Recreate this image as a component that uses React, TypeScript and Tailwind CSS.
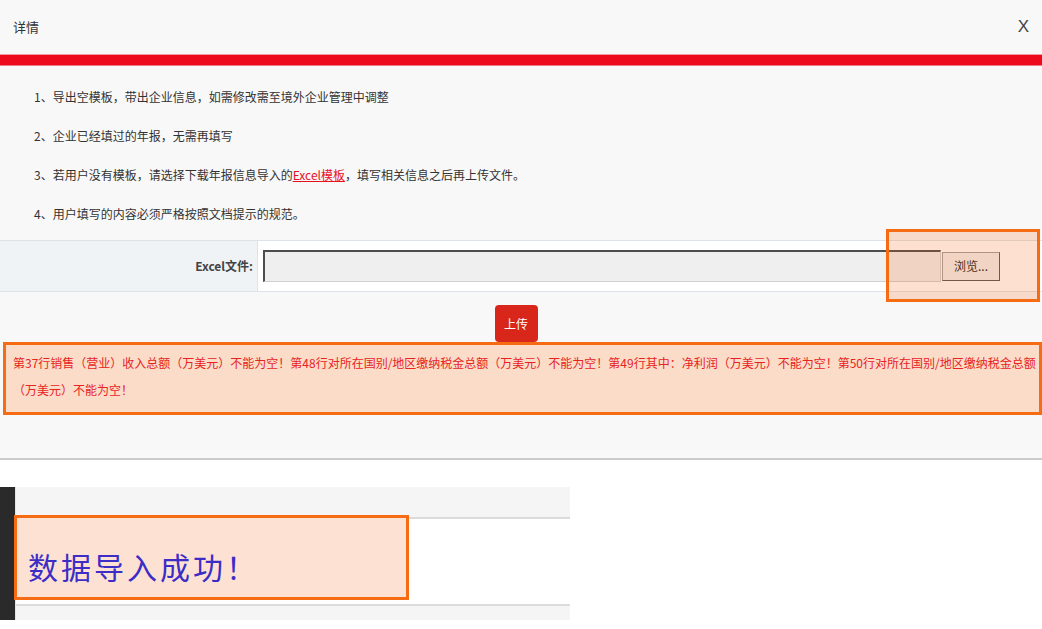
export default function App() {
  const tips = [
    "1、导出空模板，带出企业信息，如需修改需至境外企业管理中调整",
    "2、企业已经填过的年报，无需再填写",
  ];

  return (
    <div className="relative w-[1042px] h-[629px] overflow-hidden bg-white font-['Noto_Sans_CJK_SC','Liberation_Sans',sans-serif] text-[#333]">
      {/* DIALOG */}
      <div className="relative h-[460px] bg-[#f8f8f8] border-b-2 border-[#cbcbcb]">
        {/* header */}
        <div className="flex h-[54px] items-center justify-between pl-[13px] pr-[13px]">
          <span className="text-[13px]">详情</span>
          <span className="font-['Liberation_Sans',sans-serif] text-[17px] font-light text-[#444]">X</span>
        </div>
        <div className="h-[12px] bg-[#ee0a1d] border-t border-b border-t-[#f39aa2] border-b-[#f07a85]" />

        {/* tips */}
        <div className="flex flex-col pt-[11px] pl-[34px] text-[12px] leading-[39px]">
          {tips.map((t, i) => (
            <p key={i}>{t}</p>
          ))}
          <p>
            3、若用户没有模板，请选择下载年报信息导入的
            <span className="text-[#e8101e] underline">Excel模板</span>
            ，填写相关信息之后再上传文件。
          </p>
          <p>4、用户填写的内容必须严格按照文档提示的规范。</p>
        </div>

        {/* file row */}
        <div className="mt-[7px] flex h-[52px] border-t border-b border-[#dde3e8]">
          <div className="flex w-[258px] items-center justify-end bg-[#eff3f6] pr-[4px] text-[12px] font-bold text-[#444] border-r border-[#dde3e8]">
            Excel文件:
          </div>
          <div className="flex flex-1 items-center bg-white pl-[5px]">
            <div className="h-[32px] w-[678px] bg-[#efefef] border-t-2 border-l-2 border-[#4d4d4d] border-b border-r border-b-[#d0d0d0] border-r-[#d0d0d0]" />
            <button className="ml-[1px] h-[29px] w-[58px] bg-[#f0f0f0] border border-[#a0a0a0] border-b-[#555] border-r-[#555] text-[12px] text-[#222]">
              浏览...
            </button>
          </div>
        </div>

        {/* upload */}
        <div className="mt-[13px] flex justify-center pr-[10px]">
          <button className="h-[37px] w-[43px] rounded-[4px] bg-[#d8261a] text-[12px] text-white">上传</button>
        </div>

        {/* error message */}
        <div className="ml-[3px] h-[73px] border-[3px] border-[#f66c14] bg-[#fadcc9] pl-[7px] pt-[4px] text-[12px] leading-[27px] text-[#e8231d]">
          第37行销售（营业）收入总额（万美元）不能为空！第48行对所在国别/地区缴纳税金总额（万美元）不能为空！第49行其中：净利润（万美元）不能为空！第50行对所在国别/地区缴纳税金总额
          <br />
          （万美元）不能为空！
        </div>

        {/* highlight over browse button */}
        <div className="absolute left-[886px] top-[229px] h-[73px] w-[154px] border-[3px] border-[#f66c14] bg-[#f5640f]/20" />
      </div>

      {/* SECOND SHOT */}
      <div className="relative mt-[27px] flex h-[133px] w-[570px]">
        <div className="w-[15px] bg-[#2a2a2a]" />
        <div className="flex flex-1 flex-col border-l border-[#e5e5e5]">
          <div className="h-[32px] bg-[#f5f5f5] border-b-2 border-[#dcdcdc]" />
          <div className="h-[87px] bg-white border-b-2 border-[#dcdcdc]" />
          <div className="flex-1 bg-[#f5f5f5]" />
        </div>
        <div className="absolute left-[14px] top-[28px] h-[85px] w-[395px] border-[3px] border-[#f66c14] bg-[#fde2d3] pl-[11px] pt-[33px]">
          <span className="text-[30px] leading-[30px] tracking-[3px] text-[#3c2dc6]">数据导入成功！</span>
        </div>
      </div>
    </div>
  );
}
